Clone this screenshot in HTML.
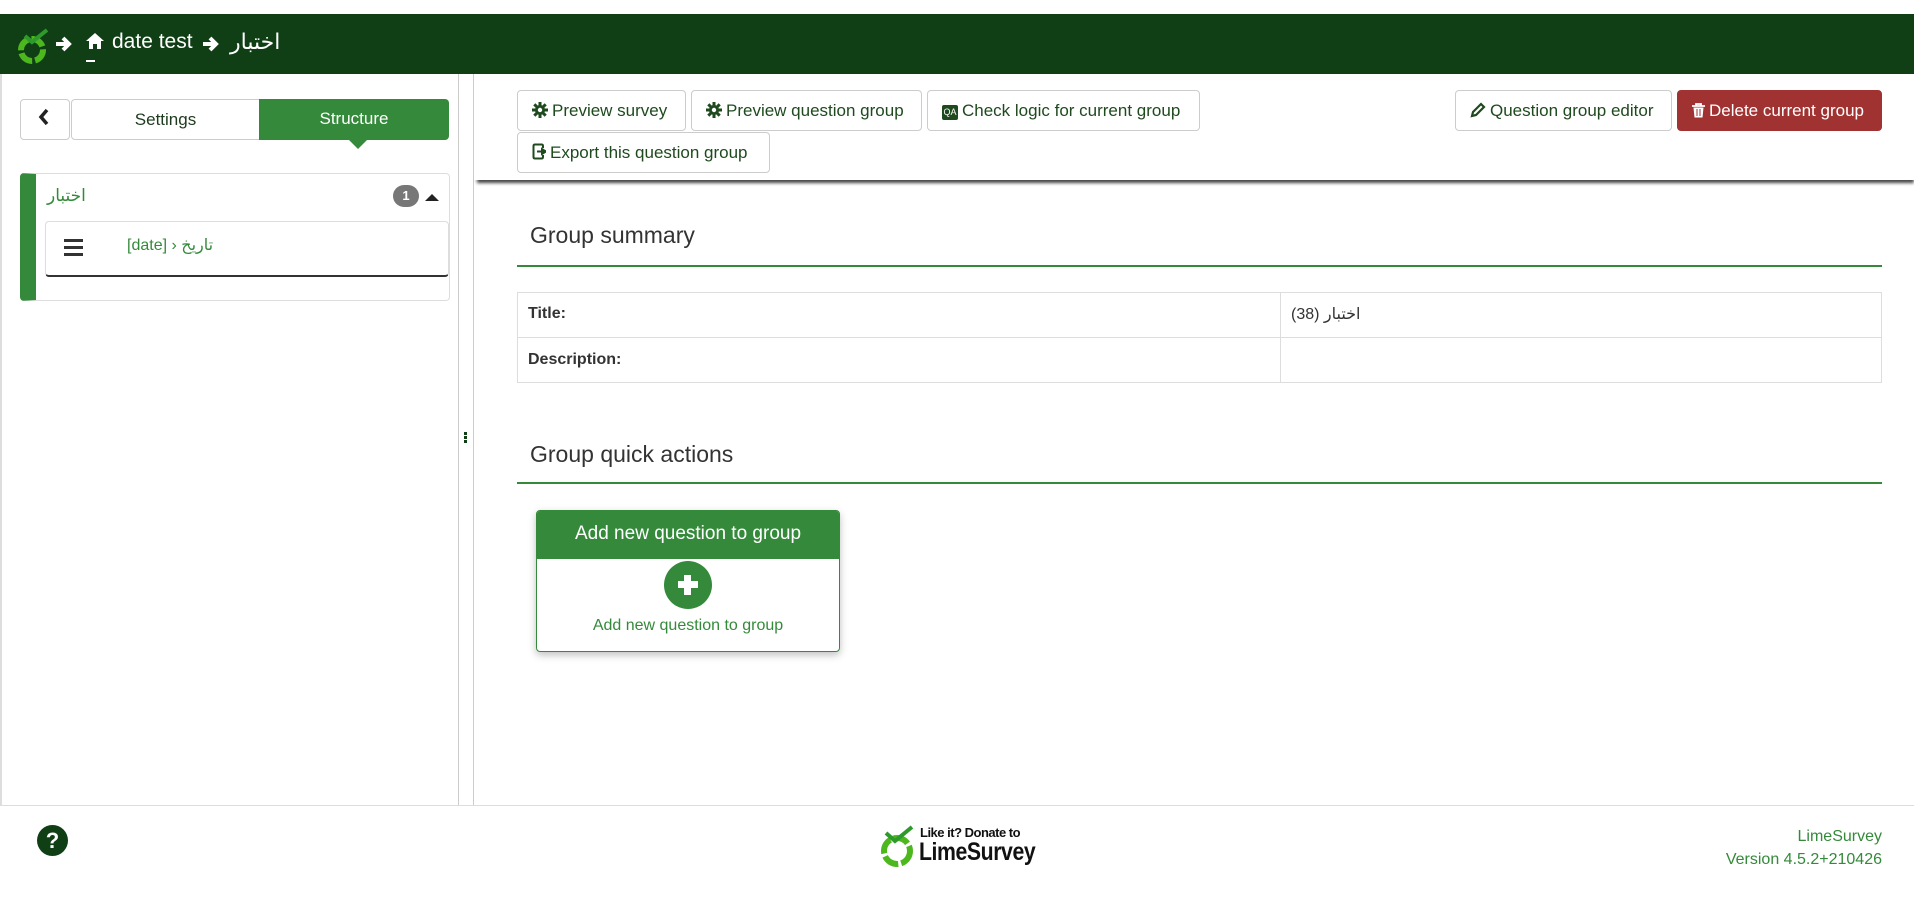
<!DOCTYPE html>
<html><head><meta charset="utf-8">
<style>
*{box-sizing:border-box;margin:0;padding:0}
body{width:1914px;height:906px;position:relative;background:#fff;font-family:"Liberation Sans","Noto Sans CJK SC",sans-serif;overflow:hidden;color:#333}
.a{position:absolute}
.btn{position:absolute;height:41px;border:1px solid #ccc;border-radius:4px;background:#fff;color:#1e4a1e;font-size:17px;line-height:39px;padding-left:14px;white-space:nowrap}
.btn svg{vertical-align:-2px;margin-right:4px}
.ar{font-family:"Liberation Sans","DejaVu Sans",sans-serif}
</style></head><body>
<svg width="0" height="0" style="position:absolute"><defs>
<g id="gear"><circle cx="8" cy="8" r="5" fill="#1e4a1e"/><g stroke="#1e4a1e" stroke-width="3"><path d="M8 0V16M0 8H16M2.3 2.3L13.7 13.7M13.7 2.3L2.3 13.7"/></g><circle cx="8" cy="8" r="2.2" fill="#fff"/></g>
</defs></svg>
<!-- top bar -->
<div class="a" style="left:0;top:14px;width:1914px;height:60px;background:#103f16"></div>
<svg class="a" style="left:16px;top:27px" width="36" height="38" viewBox="0 0 36 38">
<circle cx="16" cy="23" r="11" fill="none" stroke="#4cb81e" stroke-width="6" stroke-dasharray="14 3"/>
<path d="M9 9 L16 15 L31 3" fill="none" stroke="#2e9a2c" stroke-width="4"/>
</svg>
<svg class="a" style="left:55px;top:35px" width="18" height="18" viewBox="0 0 18 18"><path d="M1 9H14M8 3L14 9L8 15" stroke="#fff" stroke-width="4" fill="none"/></svg>
<svg class="a" style="left:85px;top:32px" width="20" height="18" viewBox="0 0 20 18"><path d="M10 1L1 9H4V17H8V12H12V17H16V9H19Z" fill="#fff"/></svg>
<div class="a" style="left:86px;top:60px;width:9px;height:2px;background:#fff"></div>
<div class="a" style="left:112px;top:30px;color:#fff;font-size:21px">date test</div>
<svg class="a" style="left:202px;top:35px" width="18" height="18" viewBox="0 0 18 18"><path d="M1 9H14M8 3L14 9L8 15" stroke="#fff" stroke-width="4" fill="none"/></svg>
<div class="a ar" style="left:230px;top:29px;color:#fff;font-size:22px">اختبار</div>

<!-- sidebar -->
<div class="a" style="left:0;top:74px;width:2px;height:731px;background:#ddd"></div>
<div class="a" style="left:458px;top:74px;width:16px;height:731px;border-left:1px solid #ccc;border-right:1px solid #ccc;background:#fff"></div>
<div class="a" style="left:464px;top:432px;width:3px;height:3px;background:#103f16;box-shadow:0 4px 0 #103f16,0 8px 0 #103f16"></div>
<div class="a" style="left:20px;top:99px;width:50px;height:41px;border:1px solid #ccc;border-radius:4px"></div>
<svg class="a" style="left:38px;top:108px" width="12" height="18" viewBox="0 0 12 18"><path d="M9 2L3 9L9 16" stroke="#222" stroke-width="3.5" fill="none"/></svg>
<div class="a" style="left:71px;top:99px;width:189px;height:41px;border:1px solid #ccc;border-radius:4px 0 0 4px;text-align:center;line-height:39px;font-size:17px;color:#1e3a1e">Settings</div>
<div class="a" style="left:259px;top:99px;width:190px;height:41px;background:#348a3a;border-radius:0 4px 4px 0;text-align:center;line-height:39px;font-size:17px;color:#fff">Structure</div>
<div class="a" style="left:348px;top:139px;width:0;height:0;border-left:10px solid transparent;border-right:10px solid transparent;border-top:10px solid #348a3a"></div>
<div class="a" style="left:20px;top:173px;width:430px;height:128px;border:1px solid #ddd;border-radius:4px;border-left:16px solid #348a3a"></div>
<div class="a ar" style="left:47px;top:186px;font-size:17px;color:#348a3a">اختبار</div>
<div class="a" style="left:393px;top:185px;width:26px;height:22px;border-radius:11px;background:#777;color:#fff;font-size:13px;font-weight:bold;text-align:center;line-height:22px">1</div>
<div class="a" style="left:425px;top:194px;border-left:7px solid transparent;border-right:7px solid transparent;border-bottom:7px solid #222"></div>
<div class="a" style="left:45px;top:221px;width:404px;height:56px;border:1px solid #ddd;border-bottom:2px solid #333;border-radius:4px"></div>
<div class="a" style="left:64px;top:239px;width:19px;height:3px;background:#333;box-shadow:0 7px 0 #333,0 14px 0 #333"></div>
<div class="a ar" style="left:127px;top:235px;font-size:16px;color:#348a3a">[date] › تاريخ</div>

<!-- toolbar -->
<div class="a" style="left:477px;top:174px;width:1437px;height:6px;box-shadow:0 3px 3px #444;background:#fff"></div>
<div class="a" style="left:474px;top:74px;width:1440px;height:106px;background:#fff"></div>
<div class="btn" style="left:517px;top:90px;width:169px"><svg width="16" height="16"><use href="#gear"/></svg>Preview survey</div>
<div class="btn" style="left:691px;top:90px;width:231px"><svg width="16" height="16"><use href="#gear"/></svg>Preview question group</div>
<div class="btn" style="left:927px;top:90px;width:273px"><span style="display:inline-block;width:16px;height:15px;background:#1e4a1e;color:#fff;font-size:9px;line-height:15px;text-align:center;vertical-align:1px;border-radius:2px;margin-right:4px">QA</span>Check logic for current group</div>
<div class="btn" style="left:517px;top:132px;width:253px"><svg width="14" height="17" viewBox="0 0 14 17"><path d="M11 5V3Q11 1.5 9.5 1.5H3Q1.5 1.5 1.5 3V14Q1.5 15.5 3 15.5H9.5Q11 15.5 11 14V12" fill="none" stroke="#1e4a1e" stroke-width="2"/><path d="M5 8.5H10V6L14 8.5L10 11V8.5" fill="#1e4a1e" stroke="#1e4a1e" stroke-width="2"/></svg>Export this question group</div>
<div class="btn" style="left:1455px;top:90px;width:217px"><svg width="16" height="16" viewBox="0 0 16 16"><path d="M3 10L11 2L14 5L6 13L2 14Z" fill="none" stroke="#1e4a1e" stroke-width="2.2"/></svg>Question group editor</div>
<div class="btn" style="left:1677px;top:90px;width:205px;background:#a03232;border-color:#a03232;color:#fff;padding-left:14px"><svg width="13" height="15" viewBox="0 0 13 15"><path d="M0 3H13M4 3V1H9V3" stroke="#fff" stroke-width="1.8" fill="none"/><path d="M1.5 4.5H11.5L10.5 14.5H2.5Z" fill="#fff"/><path d="M5 6V13M8 6V13" stroke="#a03232" stroke-width="1"/></svg>Delete current group</div>

<!-- group summary -->
<div class="a" style="left:530px;top:222px;font-size:23px;color:#333">Group summary</div>
<div class="a" style="left:517px;top:265px;width:1365px;height:2px;background:#348a3a"></div>
<div class="a" style="left:517px;top:292px;width:1365px;height:91px;border:1px solid #ddd"></div>
<div class="a" style="left:517px;top:337px;width:1365px;height:1px;background:#ddd"></div>
<div class="a" style="left:1280px;top:292px;width:1px;height:91px;background:#ddd"></div>
<div class="a" style="left:528px;top:305px;font-size:16px;font-weight:bold">Title:</div>
<div class="a" style="left:528px;top:351px;font-size:16px;font-weight:bold">Description:</div>
<div class="a ar" style="left:1291px;top:304px;font-size:16px">اختبار (38)</div>

<div class="a" style="left:530px;top:441px;font-size:23px;color:#333">Group quick actions</div>
<div class="a" style="left:517px;top:482px;width:1365px;height:2px;background:#348a3a"></div>

<div class="a" style="left:536px;top:510px;width:304px;height:142px;border:1px solid #348a3a;border-radius:4px;box-shadow:0 3px 8px rgba(0,0,0,.25);overflow:hidden">
<div style="height:48px;background:#348a3a;color:#fff;font-size:19px;text-align:center;line-height:46px">Add new question to group</div>
<div style="position:absolute;left:127px;top:50px;width:48px;height:48px;border-radius:50%;background:#348a3a"></div>
<div style="position:absolute;left:141px;top:70px;width:20px;height:7px;background:#fff"></div>
<div style="position:absolute;left:147px;top:64px;width:7px;height:20px;background:#fff"></div>
<div style="position:absolute;left:0;top:106px;width:302px;text-align:center;font-size:16px;color:#348a3a">Add new question to group</div>
</div>

<!-- footer -->
<div class="a" style="left:0;top:805px;width:1914px;height:1px;background:#ddd"></div>
<div class="a" style="left:37px;top:825px;width:31px;height:31px;border-radius:50%;background:#103f16;color:#fff;font-weight:bold;font-size:22px;text-align:center;line-height:31px">?</div>
<svg class="a" style="left:880px;top:823px" width="36" height="46" viewBox="0 0 36 46">
<circle cx="17" cy="28" r="13" fill="none" stroke="#4cb81e" stroke-width="6" stroke-dasharray="16 3"/>
<path d="M6 10 L15 18 L32 4" fill="none" stroke="#2e9a2c" stroke-width="4"/></svg>
<div class="a" style="left:920px;top:825px;font-size:13px;font-weight:bold;color:#111;letter-spacing:-0.5px">Like it? Donate to</div>
<div class="a" style="left:919px;top:838px;font-size:25px;font-weight:bold;color:#111;letter-spacing:-0.5px;transform:scaleX(0.85);transform-origin:left">LimeSurvey</div>
<div class="a" style="right:32px;top:825px;font-size:16px;color:#348a3a;text-align:right;line-height:23px">LimeSurvey<br>Version 4.5.2+210426</div>
</body></html>
